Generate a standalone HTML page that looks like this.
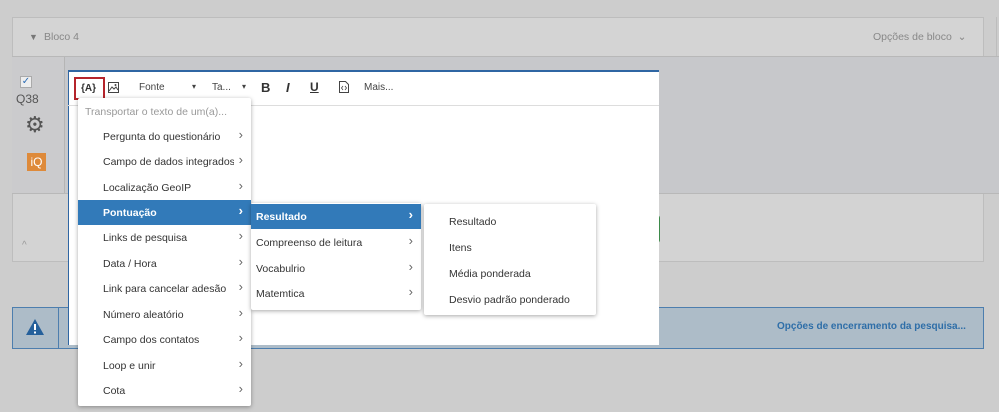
<!DOCTYPE html>
<html><head><meta charset="utf-8"><style>
*{box-sizing:border-box;margin:0;padding:0}
body{width:999px;height:412px;background:#cdcdcd;font-family:"Liberation Sans",sans-serif;position:relative;overflow:hidden;font-size:11px;color:#333}
.abs{position:absolute}
.menu{position:absolute;background:#fff;box-shadow:0 1px 4px rgba(0,0,0,.35);border-radius:2px}
.it{position:absolute;left:0;right:0;height:25px;line-height:27px;color:#333;font-size:10.5px;white-space:nowrap}
.it .ar{position:absolute;right:8px;top:-3px;color:#666;font-size:13px}
.sel{background:#327ab9;color:#fff;font-weight:bold}
.sel .ar{color:#fff}
.clip{position:absolute;left:25px;width:131px;overflow:hidden}
</style></head><body>
<div class="abs" style="left:12px;top:17px;width:972px;height:40px;background:#d4d4d4;border:1px solid #bdbdbd;border-bottom:none"></div>
<div class="abs" style="left:996px;top:17px;width:1px;height:40px;background:#bdbdbd"></div>
<div class="abs" style="left:29px;top:32px;font-size:9px;color:#777">▼</div>
<div class="abs" style="left:44px;top:31px;font-size:10.5px;color:#888">Bloco 4</div>
<div class="abs" style="left:873px;top:31px;font-size:10.5px;color:#888">Opções de bloco &nbsp;⌄</div>
<div class="abs" style="left:12px;top:56px;width:987px;height:138px;background:#c7c8cb;border-top:1px solid #b8b8b8;border-bottom:1px solid #b8b8b8"></div>
<div class="abs" style="left:12px;top:57px;width:53px;height:136px;background:#cbcbcd;border-right:1px solid #b5b5b5"></div>
<div class="abs" style="left:20px;top:76px;width:12px;height:12px;background:#eee;border:1px solid #aaa;color:#2d6db5;font-size:10px;line-height:10px;text-align:center">✓</div>
<div class="abs" style="left:16px;top:92px;font-size:12px;color:#555">Q38</div>
<div class="abs" style="left:25px;top:114px;font-size:22px;color:#555;line-height:22px">⚙</div>
<div class="abs" style="left:27px;top:153px;width:19px;height:18px;background:#de8a3a;color:#fff;font-size:12px;line-height:18px;text-align:center">iQ</div>
<div class="abs" style="left:12px;top:194px;width:972px;height:68px;background:#d3d3d3;border:1px solid #bdbdbd;border-top:none"></div>
<div class="abs" style="left:22px;top:240px;font-size:10px;color:#999">^</div>
<div class="abs" style="left:655px;top:215px;width:5px;height:28px;background:#3d8a4a;border-radius:0 3px 3px 0"></div>
<div class="abs" style="left:12px;top:307px;width:972px;height:42px;background:#adbcc8;border:1px solid #4d7eae"></div>
<div class="abs" style="left:58px;top:308px;width:1px;height:40px;background:#4d7eae"></div>
<svg class="abs" style="left:25px;top:318px" width="20" height="18" viewBox="0 0 20 18"><path d="M10 1L19 17H1Z" fill="#25609b"/><rect x="9" y="6" width="2" height="6" fill="#fff"/><rect x="9" y="13.5" width="2" height="2" fill="#fff"/></svg>
<div class="abs" style="left:777px;top:321px;font-size:10px;color:#2e6ea8;font-weight:bold">Opções de encerramento da pesquisa...</div>
<div class="abs" style="left:68px;top:70px;width:591px;height:275px;background:#fff;border-top:2px solid #2f66a3;border-left:1px solid #2f66a3"></div>
<div class="abs" style="left:68px;top:105px;width:591px;height:1px;background:#ddd"></div>
<div class="abs" style="left:74px;top:77px;width:31px;height:23px;border:2px solid #b5242b"></div>
<div class="abs" style="left:81px;top:83px;font-size:10px;font-weight:bold;color:#333">{A}</div>
<svg class="abs" style="left:108px;top:82px" width="11" height="11" viewBox="0 0 11 11"><rect x=".5" y=".5" width="10" height="10" fill="none" stroke="#444"/><path d="M1 9L4 5L6 7L8 5L10 8" fill="none" stroke="#444"/><circle cx="7.5" cy="3" r="1" fill="#444"/></svg>
<div class="abs" style="left:139px;top:82px;font-size:10px;color:#444">Fonte</div>
<div class="abs" style="left:192px;top:82px;font-size:8px;color:#444">▾</div>
<div class="abs" style="left:212px;top:82px;font-size:10px;color:#444">Ta...</div>
<div class="abs" style="left:242px;top:82px;font-size:8px;color:#444">▾</div>
<div class="abs" style="left:261px;top:80px;font-size:13px;font-weight:bold;color:#333">B</div>
<div class="abs" style="left:286px;top:80px;font-size:13px;font-weight:bold;font-style:italic;color:#333">I</div>
<div class="abs" style="left:310px;top:80px;font-size:12px;font-weight:bold;text-decoration:underline;color:#333">U</div>
<svg class="abs" style="left:339px;top:81px" width="10" height="12" viewBox="0 0 10 12"><path d="M.5 .5H6.5L9.5 3.5V11.5H.5Z" fill="none" stroke="#444"/><path d="M4 5L2.5 7L4 9M6 5L7.5 7L6 9" fill="none" stroke="#444" stroke-width=".8"/></svg>
<div class="abs" style="left:364px;top:82px;font-size:10px;color:#444">Mais...</div>
<div class="menu" style="left:78px;top:98px;width:173px;height:308px">
<div class="abs" style="left:7px;top:8px;color:#999;font-size:10.5px">Transportar o texto de um(a)...</div>
<div class="it" style="top:26px;padding-left:25px">Pergunta do questionário<span class="ar">›</span></div>
<div class="it" style="top:51px"><span class="clip">Campo de dados integrados</span><span class="ar">›</span></div>
<div class="it" style="top:77px;padding-left:25px">Localização GeoIP<span class="ar">›</span></div>
<div class="it sel" style="top:102px;padding-left:25px">Pontuação<span class="ar">›</span></div>
<div class="it" style="top:127px;padding-left:25px">Links de pesquisa<span class="ar">›</span></div>
<div class="it" style="top:153px;padding-left:25px">Data / Hora<span class="ar">›</span></div>
<div class="it" style="top:178px;padding-left:25px">Link para cancelar adesão<span class="ar">›</span></div>
<div class="it" style="top:204px;padding-left:25px">Número aleatório<span class="ar">›</span></div>
<div class="it" style="top:229px;padding-left:25px">Campo dos contatos<span class="ar">›</span></div>
<div class="it" style="top:255px;padding-left:25px">Loop e unir<span class="ar">›</span></div>
<div class="it" style="top:280px;padding-left:25px">Cota<span class="ar">›</span></div>
</div>
<div class="menu" style="left:251px;top:203px;width:170px;height:107px">
<div class="it sel" style="top:1px;padding-left:5px">Resultado<span class="ar">›</span></div>
<div class="it" style="top:27px;padding-left:5px">Compreenso de leitura<span class="ar">›</span></div>
<div class="it" style="top:53px;padding-left:5px">Vocabulrio<span class="ar">›</span></div>
<div class="it" style="top:78px;padding-left:5px">Matemtica<span class="ar">›</span></div>
</div>
<div class="menu" style="left:424px;top:204px;width:172px;height:111px">
<div class="it" style="top:5px;padding-left:25px">Resultado</div>
<div class="it" style="top:31px;padding-left:25px">Itens</div>
<div class="it" style="top:57px;padding-left:25px">Média ponderada</div>
<div class="it" style="top:83px;padding-left:25px">Desvio padrão ponderado</div>
</div>
</body></html>
